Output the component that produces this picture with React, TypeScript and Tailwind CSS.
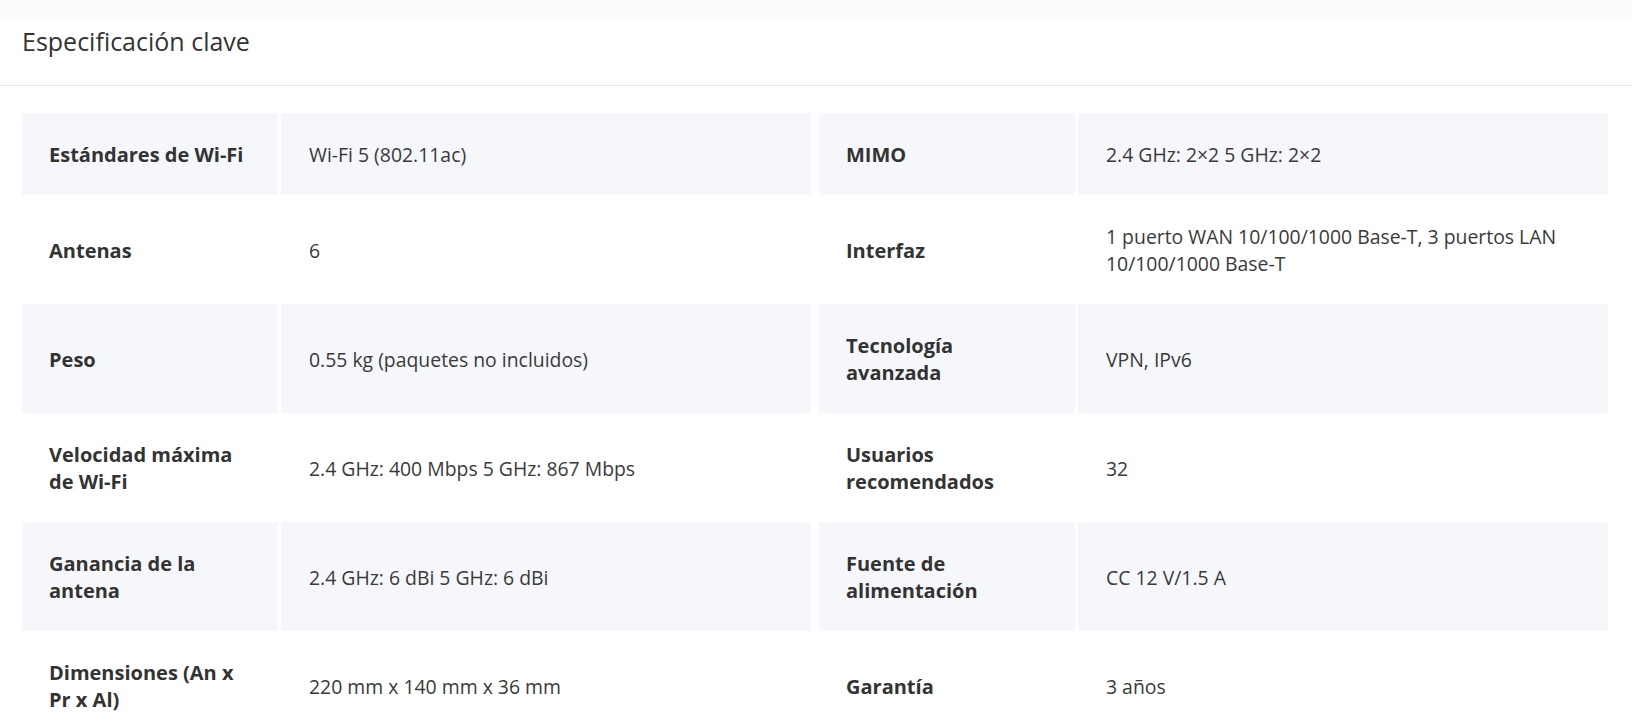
const specs: [string, string, string, string][] = [
  ["Estándares de Wi-Fi", "Wi-Fi 5 (802.11ac)", "MIMO", "2.4 GHz: 2×2 5 GHz: 2×2"],
  ["Antenas", "6", "Interfaz", "1 puerto WAN 10/100/1000 Base-T, 3 puertos LAN 10/100/1000 Base-T"],
  ["Peso", "0.55 kg (paquetes no incluidos)", "Tecnología avanzada", "VPN, IPv6"],
  ["Velocidad máxima de Wi-Fi", "2.4 GHz: 400 Mbps 5 GHz: 867 Mbps", "Usuarios recomendados", "32"],
  ["Ganancia de la antena", "2.4 GHz: 6 dBi 5 GHz: 6 dBi", "Fuente de alimentación", "CC 12 V/1.5 A"],
  ["Dimensiones (An x Pr x Al)", "220 mm x 140 mm x 36 mm", "Garantía", "3 años"],
];

const Cell = ({ label, value, gray }: { label: string; value: string; gray: boolean }) => (
  <div className="flex flex-1 gap-[3px]">
    <div
      className={`w-[256px] shrink-0 flex items-center pl-[27px] pr-[27px] pt-[28px] pb-[27px] text-[20px] font-bold ${
        gray ? "bg-[#f6f7fa]" : ""
      }`}
    >
      {label}
    </div>
    <div
      className={`flex-1 flex items-center pl-[28px] pr-[28px] pt-[28px] pb-[27px] text-[19.4px] text-[#3a3a3a] ${
        gray ? "bg-[#f6f7fa]" : ""
      }`}
    >
      {value}
    </div>
  </div>
);

export default function App() {
  return (
    <div
      className="h-[728px] overflow-hidden bg-white text-[#333]"
      style={{ fontFamily: '"Open Sans", "Noto Sans", sans-serif' }}
    >
      <div className="h-[20px] bg-[#fcfcfd]" />
      <div className="h-[66px] border-b border-[#e8e8e8] px-[22px] pt-[3px]">
        <h2 className="text-[25px] leading-[36px] font-normal text-[#333]">Especificación clave</h2>
      </div>

      <div className="pl-[22px] pr-[24px] pt-[27px] leading-[27px]">
        {specs.map(([l1, v1, l2, v2], i) => (
          <div key={l1} className="flex gap-[8px]">
            <Cell label={l1} value={v1} gray={i % 2 === 0} />
            <Cell label={l2} value={v2} gray={i % 2 === 0} />
          </div>
        ))}
      </div>
    </div>
  );
}
